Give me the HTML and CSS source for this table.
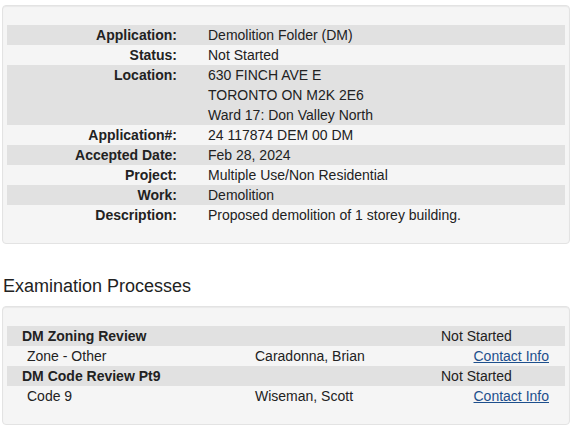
FILE: index.html
```html
<!DOCTYPE html>
<html lang="en">
<head>
<meta charset="utf-8">
<title>Application Details</title>
<link rel="stylesheet" href="styles.css">
</head>
<body>
<div class="well details">
  <div class="row dark"><div class="label">Application:</div><div class="value">Demolition Folder (DM)</div></div>
  <div class="row"><div class="label">Status:</div><div class="value">Not Started</div></div>
  <div class="row dark"><div class="label">Location:</div><div class="value">630 FINCH AVE E<br>TORONTO ON M2K 2E6<br>Ward 17: Don Valley North</div></div>
  <div class="row"><div class="label">Application#:</div><div class="value">24 117874 DEM 00 DM</div></div>
  <div class="row dark"><div class="label">Accepted Date:</div><div class="value">Feb 28, 2024</div></div>
  <div class="row"><div class="label">Project:</div><div class="value">Multiple Use/Non Residential</div></div>
  <div class="row dark"><div class="label">Work:</div><div class="value">Demolition</div></div>
  <div class="row"><div class="label">Description:</div><div class="value">Proposed demolition of 1 storey building.</div></div>
</div>

<h2 class="section-title">Examination Processes</h2>

<div class="well processes">
  <div class="prow dark head"><div class="pname">DM Zoning Review</div><div class="pstatus">Not Started</div></div>
  <div class="prow sub"><div class="ptype">Zone - Other</div><div class="pexam">Caradonna, Brian</div><div class="plink"><a href="#">Contact Info</a></div></div>
  <div class="prow dark head"><div class="pname">DM Code Review Pt9</div><div class="pstatus">Not Started</div></div>
  <div class="prow sub"><div class="ptype">Code 9</div><div class="pexam">Wiseman, Scott</div><div class="plink"><a href="#">Contact Info</a></div></div>
</div>
</body>
</html>
```

FILE: styles.css
```css
html, body {
  margin: 0;
  padding: 0;
  background: #ffffff;
}
body {
  font-family: "Liberation Sans", Arial, Helvetica, sans-serif;
  font-size: 14px;
  line-height: 20px;
  color: #222222;
  padding: 5px 2px 0 2px;
}
.well {
  background: #f5f5f5;
  border: 1px solid #e3e3e3;
  border-radius: 4px;
  box-shadow: inset 0 1px 1px rgba(0,0,0,0.05);
  padding: 19px 4px 18px 4px;
  width: 568px;
  box-sizing: border-box;
}
.row {
  display: grid;
  grid-template-columns: 170px 1fr;
}
.dark {
  background: #e1e1e1;
}
.label {
  font-weight: bold;
  text-align: right;
}
.value {
  padding-left: 31px;
}
.section-title {
  font-size: 18px;
  font-weight: normal;
  line-height: 20px;
  margin: 32px 0 10px 1px;
  color: #222222;
}
.prow {
  display: grid;
  grid-template-columns: 248px 186px 1fr;
}
.pname {
  grid-column: 1 / 3;
  font-weight: bold;
  padding-left: 15px;
}
.pstatus {
  grid-column: 3;
}
.ptype {
  padding-left: 20px;
}
.plink {
  text-align: right;
  padding-right: 16px;
}
.plink a {
  color: #1d4f8c;
  text-decoration: underline;
}
```
